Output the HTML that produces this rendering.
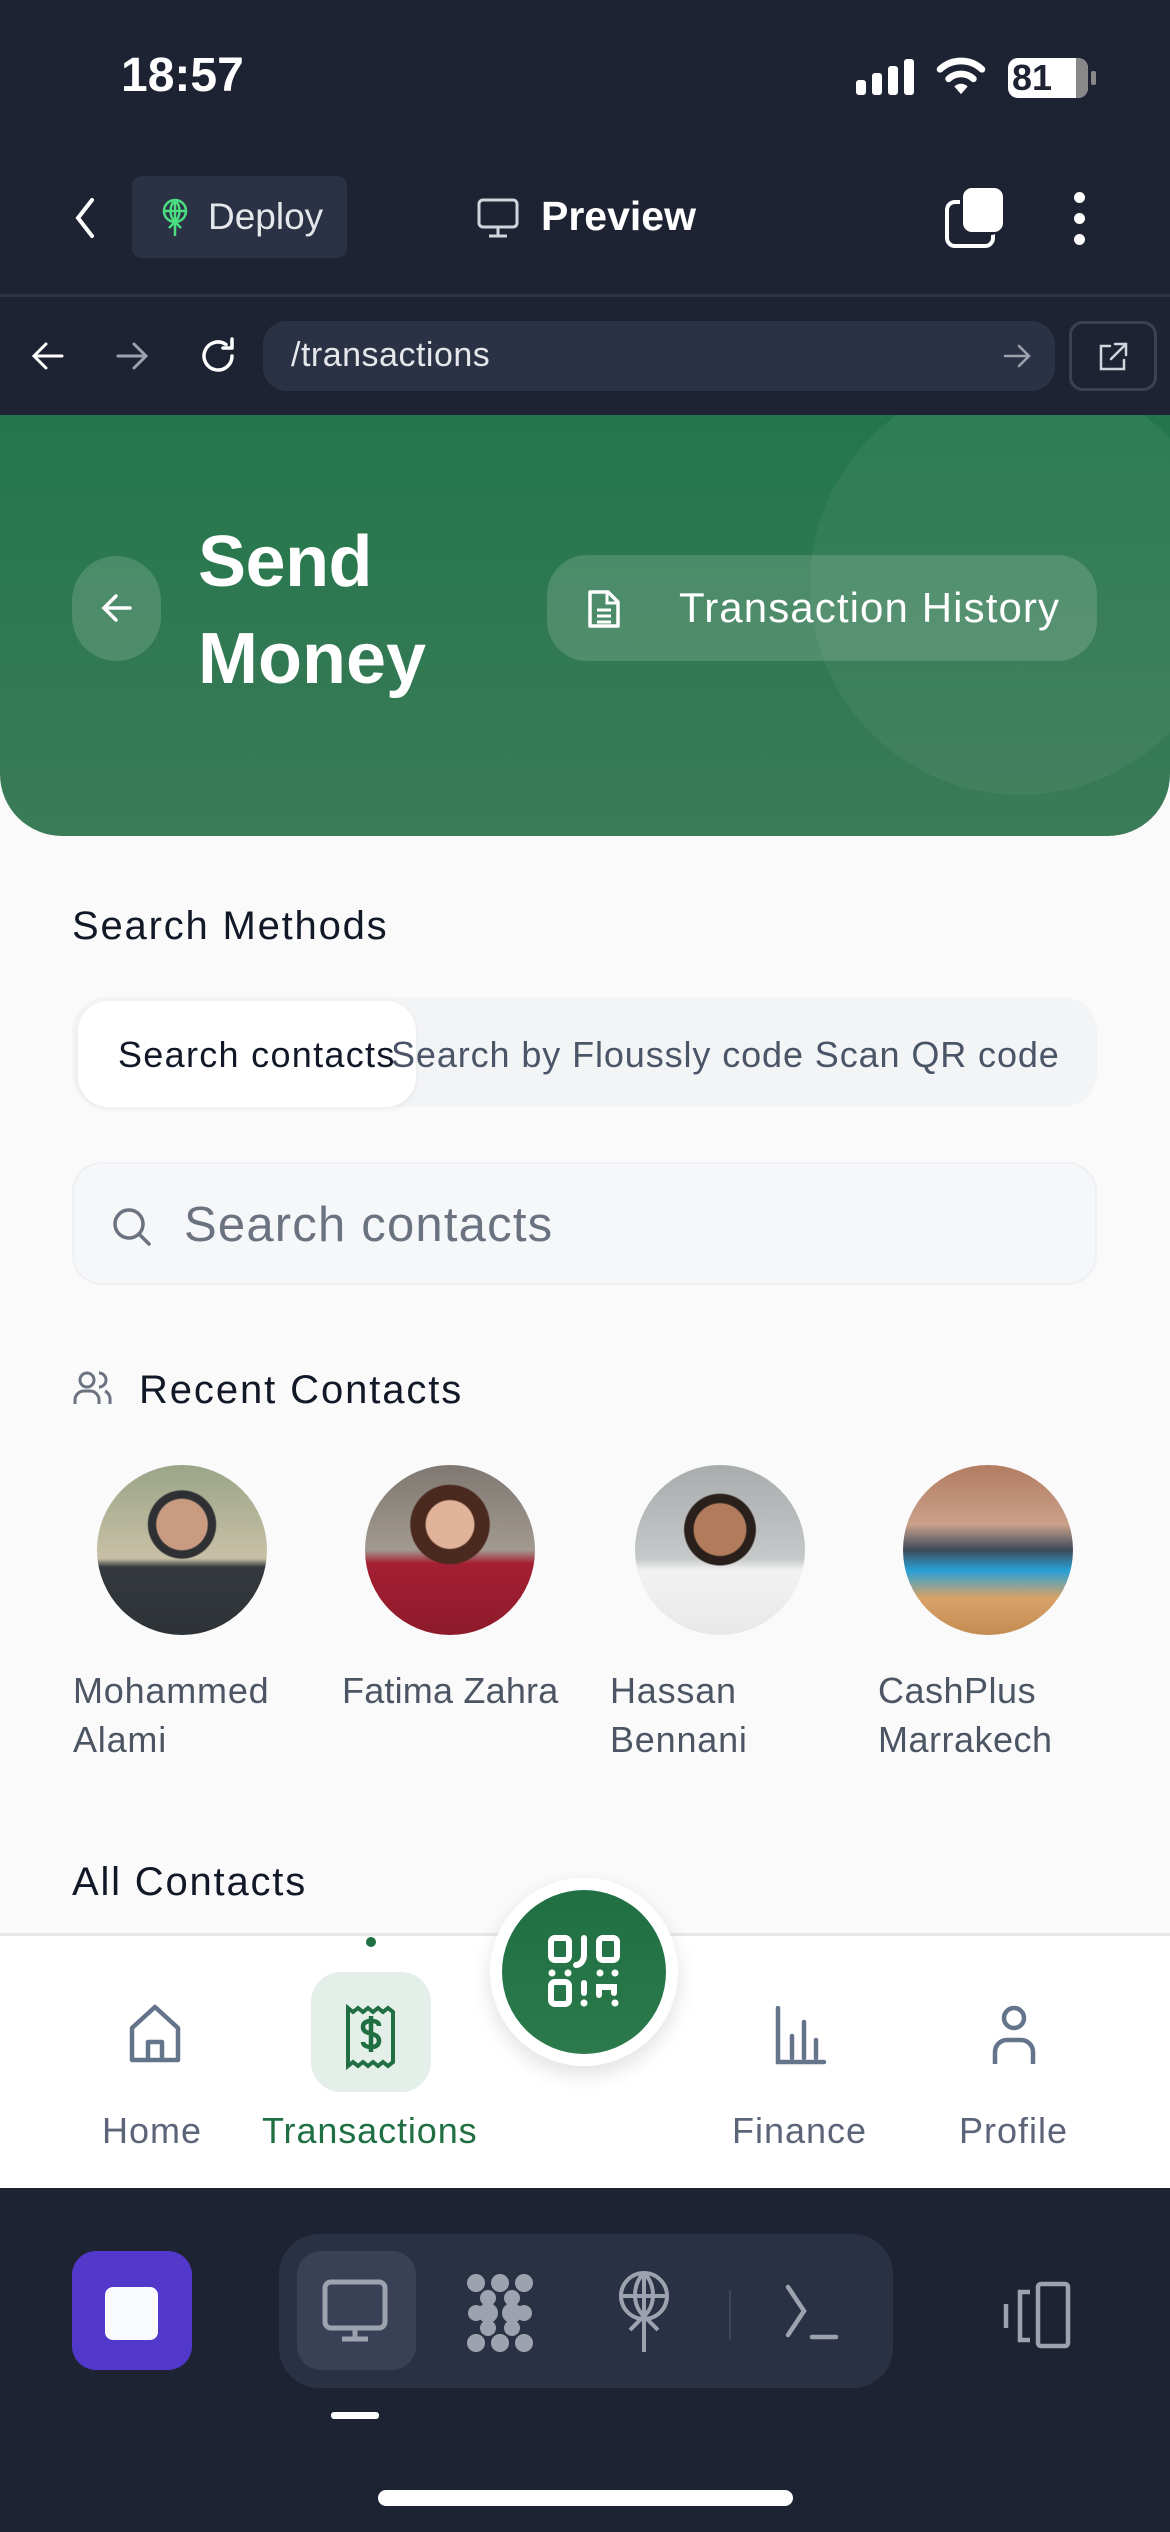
<!DOCTYPE html>
<html><head><meta charset="utf-8">
<style>
*{margin:0;padding:0;box-sizing:border-box}
body{width:1170px;height:2532px;overflow:hidden;background:#fafafa;font-family:"Liberation Sans",sans-serif;position:relative}
.a{position:absolute}
.t{position:absolute;white-space:nowrap;line-height:1}
</style></head><body>
<!-- top dark -->
<div class="a" style="left:0;top:0;width:1170px;height:415px;background:#1e2334"></div>
<div class="t" style="left:121px;top:52px;font-size:48px;font-weight:bold;color:#fff">18:57</div>
<!-- signal -->
<div class="a" style="left:856px;top:80px;width:10px;height:15px;background:#fff;border-radius:3px"></div>
<div class="a" style="left:872px;top:73px;width:10px;height:22px;background:#fff;border-radius:3px"></div>
<div class="a" style="left:888px;top:66px;width:10px;height:29px;background:#fff;border-radius:3px"></div>
<div class="a" style="left:904px;top:59px;width:10px;height:36px;background:#fff;border-radius:3px"></div>
<svg class="a" style="left:936px;top:56px" width="50" height="40" viewBox="0 0 52 42"><path d="M4 14 A32 32 0 0 1 48 14" stroke="#fff" stroke-width="7" fill="none" stroke-linecap="round"/><path d="M13 24 A19 19 0 0 1 39 24" stroke="#fff" stroke-width="7" fill="none" stroke-linecap="round"/><path d="M26 40 L19 32 A10 10 0 0 1 33 32 Z" fill="#fff"/></svg>
<div class="a" style="left:1008px;top:58px;width:80px;height:40px;background:#fff;border-radius:10px"></div>
<div class="a" style="left:1076px;top:58px;width:12px;height:40px;background:#888;border-radius:0 10px 10px 0"></div>
<div class="a" style="left:1091px;top:71px;width:5px;height:14px;background:#888;border-radius:2px"></div>
<div class="t" style="left:1012px;top:60px;font-size:36px;font-weight:bold;color:#1e2334">81</div>
<!-- top bar -->
<svg class="a" style="left:70px;top:196px" width="30" height="44" viewBox="0 0 30 44"><path d="M22 4 L8 22 L22 40" stroke="#fff" stroke-width="4" fill="none" stroke-linecap="round"/></svg>
<div class="a" style="left:132px;top:176px;width:215px;height:82px;background:#2c3245;border-radius:10px"></div>
<svg class="a" style="left:160px;top:198px" width="30" height="40" viewBox="0 0 30 40"><circle cx="15" cy="13" r="11" stroke="#4ade80" stroke-width="2.5" fill="none"/><path d="M4 13H26M15 2V38M9 30L15 24L21 30M15 2C9 8 9 18 15 24M15 2C21 8 21 18 15 24" stroke="#4ade80" stroke-width="2.5" fill="none"/></svg>
<div class="t" style="left:208px;top:198px;font-size:37px;color:#e5e7eb">Deploy</div>
<svg class="a" style="left:476px;top:196px" width="44" height="44" viewBox="0 0 44 44"><rect x="3" y="4" width="38" height="27" rx="4" stroke="#d1d5db" stroke-width="3" fill="none"/><path d="M22 31V39M13 40H31" stroke="#d1d5db" stroke-width="3"/></svg>
<div class="t" style="left:541px;top:196px;font-size:41px;font-weight:bold;color:#fff">Preview</div>
<div class="a" style="left:945px;top:200px;width:50px;height:48px;border:4px solid #fff;border-radius:10px"></div>
<div class="a" style="left:963px;top:188px;width:40px;height:44px;background:#fff;border-radius:9px;box-shadow:-3px 3px 0 #1e2334"></div>
<div class="a" style="left:1074px;top:192px;width:11px;height:11px;background:#fff;border-radius:50%"></div>
<div class="a" style="left:1074px;top:213px;width:11px;height:11px;background:#fff;border-radius:50%"></div>
<div class="a" style="left:1074px;top:234px;width:11px;height:11px;background:#fff;border-radius:50%"></div>
<div class="a" style="left:0;top:294px;width:1170px;height:3px;background:#2d3345"></div>
<!-- URL row -->
<svg class="a" style="left:28px;top:336px" width="40" height="40" viewBox="0 0 40 40"><path d="M34 20H6M18 8L6 20L18 32" stroke="#fff" stroke-width="3" fill="none" stroke-linecap="round"/></svg>
<svg class="a" style="left:112px;top:336px" width="40" height="40" viewBox="0 0 40 40"><path d="M6 20H34M22 8L34 20L22 32" stroke="#9ca3af" stroke-width="3" fill="none" stroke-linecap="round"/></svg>
<svg class="a" style="left:196px;top:334px" width="44" height="44" viewBox="0 0 44 44"><path d="M36 22A14 14 0 1 1 30 10.5" stroke="#fff" stroke-width="3.5" fill="none" stroke-linecap="round"/><path d="M36 5V14H27" stroke="#fff" stroke-width="3.5" fill="none" stroke-linecap="round" stroke-linejoin="round"/></svg>
<div class="a" style="left:263px;top:321px;width:792px;height:70px;background:#2c3245;border-radius:24px"></div>
<div class="t" style="left:291px;top:338px;font-size:34px;color:#e5e7eb;letter-spacing:0.5px">/transactions</div>
<svg class="a" style="left:1002px;top:342px" width="30" height="28" viewBox="0 0 30 28"><path d="M3 14H27M17 4L27 14L17 24" stroke="#9ca3af" stroke-width="2.5" fill="none" stroke-linecap="round"/></svg>
<div class="a" style="left:1069px;top:321px;width:88px;height:70px;border:3px solid #3b4256;border-radius:14px"></div>
<svg class="a" style="left:1096px;top:340px" width="34" height="34" viewBox="0 0 34 34"><path d="M14 6H5V29H28V20M19 4H30V15M30 4L15 19" stroke="#d1d5db" stroke-width="2.5" fill="none" stroke-linecap="round"/></svg>
<!-- green header -->
<div class="a" style="left:0;top:415px;width:1170px;height:421px;background:linear-gradient(180deg,#23764a,#3b7b58);border-radius:0 0 62px 62px;overflow:hidden">
 <div class="a" style="left:810px;top:-40px;width:420px;height:420px;border-radius:50%;background:rgba(255,255,255,0.05)"></div>
</div>
<div class="a" style="left:72px;top:556px;width:89px;height:105px;background:rgba(255,255,255,0.15);border-radius:45px"></div>
<svg class="a" style="left:98px;top:590px" width="38" height="36" viewBox="0 0 38 36"><path d="M32 18H6M18 6L6 18L18 30" stroke="#fff" stroke-width="3.5" fill="none" stroke-linecap="round"/></svg>
<div class="t" style="left:198px;top:526px;font-size:72px;font-weight:bold;color:#fff;letter-spacing:-0.5px">Send</div>
<div class="t" style="left:198px;top:623px;font-size:72px;font-weight:bold;color:#fff;letter-spacing:0px">Money</div>
<div class="a" style="left:547px;top:555px;width:550px;height:106px;background:rgba(255,255,255,0.15);border-radius:40px"></div>
<svg class="a" style="left:586px;top:588px" width="36" height="42" viewBox="0 0 36 42"><path d="M4 4H22L32 14V38H4Z" stroke="#fff" stroke-width="3.5" fill="none" stroke-linejoin="round"/><path d="M21 4V15H32M11 22H25M11 28H25M11 34H25" stroke="#fff" stroke-width="3" fill="none"/></svg>
<div class="t" style="left:679px;top:587px;font-size:42px;color:#fff;letter-spacing:1.1px">Transaction History</div>
<!-- content -->
<div class="t" style="left:72px;top:906px;font-size:40px;color:#111827;letter-spacing:1.8px">Search Methods</div>
<div class="a" style="left:72px;top:997px;width:1025px;height:110px;background:#f3f4f6;border-radius:34px"></div>
<div class="a" style="left:78px;top:1001px;width:338px;height:106px;background:#fff;border-radius:30px;box-shadow:0 2px 6px rgba(0,0,0,0.06)"></div>
<div class="t" style="left:118px;top:1037px;font-size:36px;color:#111827;letter-spacing:1.3px">Search contacts</div>
<div class="t" style="left:391px;top:1037px;font-size:36px;color:#4b5568;letter-spacing:0.9px">Search by Floussly code Scan QR code</div>
<div class="a" style="left:72px;top:1162px;width:1025px;height:123px;background:#f6f7f9;border:2px solid #eef0f3;border-radius:30px"></div>
<svg class="a" style="left:108px;top:1203px" width="48" height="48" viewBox="0 0 48 48"><circle cx="21" cy="21" r="14" stroke="#6b7280" stroke-width="3.5" fill="none"/><path d="M31 31L41 41" stroke="#6b7280" stroke-width="3.5" stroke-linecap="round"/></svg>
<div class="t" style="left:184px;top:1201px;font-size:49px;color:#6b7280;letter-spacing:1.2px">Search contacts</div>
<svg class="a" style="left:72px;top:1368px" width="42" height="40" viewBox="0 0 42 40"><circle cx="15" cy="12" r="7" stroke="#6b7280" stroke-width="3" fill="none"/><path d="M3 36V32A9 9 0 0 1 12 23H18A9 9 0 0 1 27 32V36M27 5A7 7 0 0 1 27 19M33 23A9 9 0 0 1 38 32V36" stroke="#6b7280" stroke-width="3" fill="none"/></svg>
<div class="t" style="left:139px;top:1370px;font-size:40px;color:#111827;letter-spacing:1.9px">Recent Contacts</div>
<!-- avatars -->
<div class="a" style="left:97px;top:1465px;width:170px;height:170px;border-radius:50%;background:radial-gradient(circle at 50% 35%,#c99c82 0 18%,#2f3033 19% 24%,transparent 25%),linear-gradient(180deg,#9aa587 0,#c8c0a6 55%,#34393d 60%,#2d3236 100%)"></div>
<div class="a" style="left:365px;top:1465px;width:170px;height:170px;border-radius:50%;background:radial-gradient(circle at 50% 35%,#e1b39b 0 17%,#4a2a1e 18% 28%,transparent 29%),linear-gradient(180deg,#7f7872 0,#a29a90 50%,#a41f32 58%,#8d1a2b 100%)"></div>
<div class="a" style="left:635px;top:1465px;width:170px;height:170px;border-radius:50%;background:radial-gradient(circle at 50% 38%,#b17b5c 0 19%,#2a201b 20% 26%,transparent 27%),linear-gradient(180deg,#a9acad 0,#c5c8c9 55%,#f2f2f2 62%,#e8e8e8 100%)"></div>
<div class="a" style="left:903px;top:1465px;width:170px;height:170px;border-radius:50%;background:linear-gradient(180deg,#b27c62 0,#caa08a 35%,#3d4a5a 50%,#27a0d6 62%,#d8a268 78%,#c48c52 100%)"></div>
<div class="t" style="left:73px;top:1666px;font-size:36px;color:#4b5563;line-height:49px;white-space:normal;width:270px;letter-spacing:0.8px">Mohammed<br>Alami</div>
<div class="t" style="left:342px;top:1666px;font-size:36px;color:#4b5563;line-height:49px;letter-spacing:0.2px">Fatima Zahra</div>
<div class="t" style="left:610px;top:1666px;font-size:36px;color:#4b5563;line-height:49px;white-space:normal;letter-spacing:0.8px">Hassan<br>Bennani</div>
<div class="t" style="left:878px;top:1666px;font-size:36px;color:#4b5563;line-height:49px;white-space:normal;letter-spacing:0.5px">CashPlus<br>Marrakech</div>
<div class="t" style="left:72px;top:1862px;font-size:40px;color:#111827;letter-spacing:1.8px">All Contacts</div>
<!-- bottom nav -->
<div class="a" style="left:0;top:1933px;width:1170px;height:255px;background:#fff;border-top:3px solid #e5e7eb"></div>
<div class="a" style="left:366px;top:1937px;width:10px;height:10px;border-radius:50%;background:#1f6f43"></div>
<div class="a" style="left:311px;top:1972px;width:120px;height:120px;border-radius:30px;background:#e5efe9"></div>
<svg class="a" style="left:126px;top:2002px" width="58" height="64" viewBox="0 0 58 64"><path d="M6 58V26L29 5L52 26V58Z M22 58V40H36V58" stroke="#64748b" stroke-width="4.5" fill="none" stroke-linejoin="round"/></svg>
<svg class="a" style="left:344px;top:2004px" width="54" height="66" viewBox="0 0 54 66"><path d="M4 4L9 8L14 4L19 8L24 4L29 8L34 4L39 8L44 4L49 8V58L44 62L39 58L34 62L29 58L24 62L19 58L14 62L9 58L4 62Z" stroke="#1f6f43" stroke-width="4" fill="none"/><path d="M35 22C35 18 32 17 27 17C22 17 19 19 19 23C19 32 35 27 35 37C35 41 32 43 27 43C22 43 19 41 19 38M27 12V48" stroke="#1f6f43" stroke-width="4.5" fill="none"/></svg>
<svg class="a" style="left:774px;top:2006px" width="54" height="60" viewBox="0 0 54 60"><path d="M4 2V56H50M18 30V52M30 16V52M42 34V52" stroke="#64748b" stroke-width="4.5" fill="none" stroke-linecap="round"/></svg>
<svg class="a" style="left:990px;top:2004px" width="48" height="62" viewBox="0 0 48 62"><circle cx="24" cy="14" r="10" stroke="#64748b" stroke-width="4.5" fill="none"/><path d="M5 60V48A12 12 0 0 1 17 36H31A12 12 0 0 1 43 48V60" stroke="#64748b" stroke-width="4.5" fill="none"/></svg>
<div class="t" style="left:102px;top:2113px;font-size:36px;color:#5b6478;letter-spacing:1px">Home</div>
<div class="t" style="left:262px;top:2113px;font-size:36px;color:#1f6f43;letter-spacing:0.9px">Transactions</div>
<div class="t" style="left:732px;top:2113px;font-size:36px;color:#5b6478;letter-spacing:1px">Finance</div>
<div class="t" style="left:959px;top:2113px;font-size:36px;color:#5b6478;letter-spacing:1px">Profile</div>
<div class="a" style="left:490px;top:1878px;width:188px;height:188px;border-radius:50%;background:#fff;box-shadow:0 8px 20px rgba(0,0,0,0.12)"></div>
<div class="a" style="left:502px;top:1890px;width:164px;height:164px;border-radius:50%;background:linear-gradient(180deg,#1f6f43,#2c7a4b)"></div>
<svg class="a" style="left:548px;top:1935px" width="72" height="74" viewBox="0 0 72 74"><rect x="3" y="3" width="18" height="22" rx="4" stroke="#fff" stroke-width="6" fill="none"/><rect x="51" y="3" width="18" height="22" rx="4" stroke="#fff" stroke-width="6" fill="none"/><rect x="3" y="47" width="18" height="22" rx="4" stroke="#fff" stroke-width="6" fill="none"/><path d="M36 3V20C36 26 32 30 28 30M36 48V58M51 60V52H66V58" stroke="#fff" stroke-width="6" fill="none" stroke-linecap="round"/><circle cx="4" cy="38" r="3.5" fill="#fff"/><circle cx="20" cy="38" r="3.5" fill="#fff"/><circle cx="52" cy="38" r="3.5" fill="#fff"/><circle cx="67" cy="38" r="3.5" fill="#fff"/><circle cx="36" cy="68" r="3.5" fill="#fff"/><circle cx="67" cy="68" r="3.5" fill="#fff"/></svg>
<!-- bottom dark -->
<div class="a" style="left:0;top:2188px;width:1170px;height:344px;background:#1e2334"></div>
<div class="a" style="left:72px;top:2251px;width:120px;height:119px;background:#5338cc;border-radius:24px"></div>
<div class="a" style="left:105px;top:2287px;width:53px;height:53px;background:#f8fafc;border-radius:8px"></div>
<div class="a" style="left:279px;top:2234px;width:614px;height:154px;background:#2b3144;border-radius:40px"></div>
<div class="a" style="left:297px;top:2251px;width:119px;height:119px;background:#3a4157;border-radius:24px"></div>
<svg class="a" style="left:320px;top:2278px" width="70" height="66" viewBox="0 0 70 66"><rect x="5" y="4" width="60" height="46" rx="6" stroke="#9ca3af" stroke-width="5" fill="none"/><path d="M35 50V60M22 61H48" stroke="#9ca3af" stroke-width="5"/></svg>
<svg class="a" style="left:464px;top:2272px" width="72" height="82" viewBox="0 0 72 82"><g fill="#9ca3af"><circle cx="12" cy="11" r="9"/><circle cx="60" cy="11" r="9"/><circle cx="36" cy="11" r="9"/><circle cx="24" cy="41" r="10"/><circle cx="48" cy="41" r="10"/><circle cx="12" cy="41" r="8"/><circle cx="60" cy="41" r="8"/><circle cx="12" cy="71" r="9"/><circle cx="36" cy="71" r="9"/><circle cx="60" cy="71" r="9"/><circle cx="24" cy="26" r="8"/><circle cx="48" cy="26" r="8"/><circle cx="24" cy="56" r="8"/><circle cx="48" cy="56" r="8"/></g></svg>
<svg class="a" style="left:614px;top:2270px" width="60" height="84" viewBox="0 0 60 84"><circle cx="30" cy="26" r="23" stroke="#9ca3af" stroke-width="4" fill="none"/><path d="M7 26H53M30 3V82M16 60L30 46L44 60M30 3C18 14 18 36 30 46M30 3C42 14 42 36 30 46" stroke="#9ca3af" stroke-width="4" fill="none"/></svg>
<div class="a" style="left:729px;top:2290px;width:2px;height:50px;background:#3d4459"></div>
<svg class="a" style="left:784px;top:2283px" width="64" height="62" viewBox="0 0 64 62"><path d="M4 4L20 28L4 52M28 54H52" stroke="#9ca3af" stroke-width="4.5" fill="none" stroke-linecap="round"/></svg>
<svg class="a" style="left:1000px;top:2280px" width="76" height="72" viewBox="0 0 76 72"><rect x="38" y="4" width="30" height="62" rx="3" stroke="#9ca3af" stroke-width="4.5" fill="none"/><path d="M30 12H20V60H30M6 24V48" stroke="#9ca3af" stroke-width="4.5" fill="none"/></svg>
<div class="a" style="left:331px;top:2412px;width:48px;height:7px;background:#fff;border-radius:3px"></div>
<div class="a" style="left:378px;top:2490px;width:415px;height:16px;background:#fff;border-radius:8px"></div>
</body></html>
